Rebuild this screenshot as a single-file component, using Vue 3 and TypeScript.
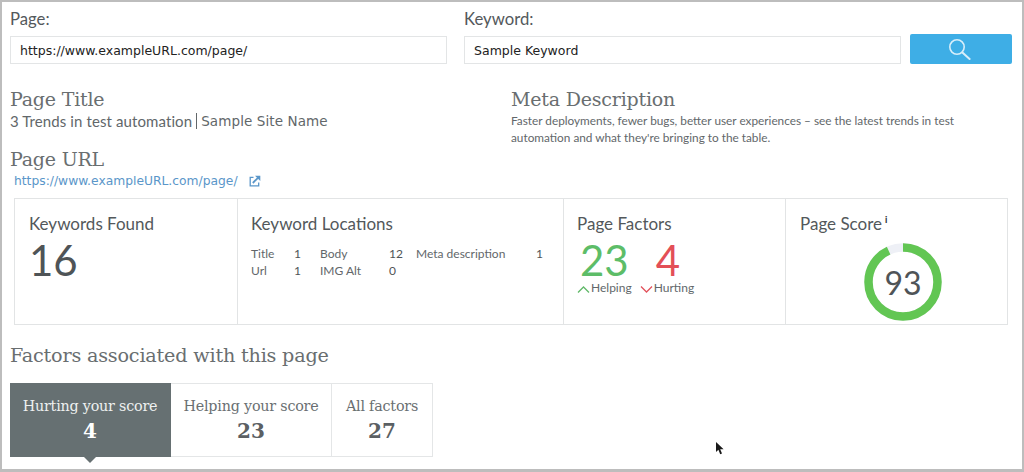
<script setup lang="ts">
const locations = [
  { label: 'Title', value: '1' },
  { label: 'Body', value: '12' },
  { label: 'Meta description', value: '1' },
  { label: 'Url', value: '1' },
  { label: 'IMG Alt', value: '0' },
]
const tabs = [
  { label: 'Hurting your score', value: 4, active: true },
  { label: 'Helping your score', value: 23, active: false },
  { label: 'All factors', value: 27, active: false },
]
const radius = 34.5
const circumference = 2 * Math.PI * radius
const dash = `${circumference * 0.93} ${circumference * 0.07}`
</script>

<template>
  <div class="frame">
    <div class="search">
      <label class="field page-field">
        <span class="label">Page:</span>
        <input class="input" value="https://www.exampleURL.com/page/" />
      </label>
      <label class="field keyword-field">
        <span class="label">Keyword:</span>
        <input class="input" value="Sample Keyword" />
      </label>
      <button class="go" aria-label="Search">
        <svg width="24" height="24" viewBox="0 0 24 24" fill="none" stroke="#d8eefa" stroke-width="1.6" stroke-linecap="round">
          <circle cx="10" cy="10" r="7.200" />
          <path d="M15.400 15.400 22.600 22" stroke-width="2" />
        </svg>
      </button>
    </div>

    <div class="meta">
      <div class="meta-left">
        <h2 class="slab">Page Title</h2>
        <p class="title-text"><span>3 Trends in test automation</span><i class="pipe"></i><span class="site">Sample Site Name</span></p>
        <h2 class="slab url-head">Page URL</h2>
        <p class="url-line">
          <a class="url">https://www.exampleURL.com/page/</a>
          <svg class="ext" width="12" height="12" viewBox="0 0 12 12" fill="none" stroke="#5a96c9" stroke-width="1.300">
            <path d="M4.500 2.300H1.200V10.800H9.700V7.500" />
            <path d="M3.800 8 9 2.800" stroke-width="1.800" />
            <path d="M6 .7H11.300V6z" fill="#5a96c9" stroke="none" />
          </svg>
        </p>
      </div>
      <div class="meta-right">
        <h2 class="slab">Meta Description</h2>
        <p class="desc">Faster deployments, fewer bugs, better user experiences – see the latest trends in test automation and what they're bringing to the table.</p>
      </div>
    </div>

    <div class="cards">
      <section class="card c1">
        <h3>Keywords Found</h3>
        <div class="big">16</div>
      </section>
      <section class="card c2">
        <h3>Keyword Locations</h3>
        <div class="locs">
          <template v-for="l in locations" :key="l.label">
            <span>{{ l.label }}</span>
            <b>{{ l.value }}</b>
          </template>
        </div>
      </section>
      <section class="card c3">
        <h3>Page Factors</h3>
        <div class="factors">
          <div class="factor helping">
            <div class="big">23</div>
            <div class="caption">
              <svg width="13" height="7" viewBox="0 0 13 7" fill="none" stroke="#62b96a" stroke-width="1.300"><path d="M1 6.500 6.500 1 12 6.500" /></svg>
              <span>Helping</span>
            </div>
          </div>
          <div class="factor hurting">
            <div class="big">4</div>
            <div class="caption">
              <svg width="13" height="7" viewBox="0 0 13 7" fill="none" stroke="#e2525c" stroke-width="1.300"><path d="M1 .5 6.500 6 12 .5" /></svg>
              <span>Hurting</span>
            </div>
          </div>
        </div>
      </section>
      <section class="card c4">
        <h3>Page Score<sup>i</sup></h3>
        <div class="ring">
          <svg width="80" height="80" viewBox="0 0 80 80">
            <circle cx="40" cy="40" :r="radius" fill="none" stroke="#eef0f6" stroke-width="8.500" />
            <circle cx="40" cy="40" :r="radius" fill="none" stroke="#62c653" stroke-width="8.500" :stroke-dasharray="dash" transform="rotate(-90 40 40)" />
          </svg>
          <span>93</span>
        </div>
      </section>
    </div>

    <h2 class="slab factors-head">Factors associated with this page</h2>
    <div class="tabs">
      <div v-for="t in tabs" :key="t.label" class="tab" :class="{ active: t.active }">
        <span class="tab-label">{{ t.label }}</span>
        <strong>{{ t.value }}</strong>
      </div>
    </div>

    <svg class="cursor" width="10" height="15" viewBox="0 0 10 15">
      <path d="M1 1v10l2.400-2.200 1.800 4.400 1.800-.8-1.800-4.200H8.600z" fill="#1a1a1a" />
    </svg>
  </div>
</template>

<style>
html, body { margin: 0; background: #fff; }
</style>

<style scoped>
.frame {
  position: relative;
  box-sizing: border-box;
  width: 1024px;
  height: 472px;
  padding: 8px 10px 0 8px;
  border: 2px solid #bdbdbd;
  border-bottom-width: 3px;
  background: #fff;
  overflow: hidden;
  font-family: Lato, "Liberation Sans", sans-serif;
  color: #555b5e;
}
.search { display: flex; align-items: flex-end; }
.field { display: flex; flex-direction: column; width: 438px; }
.keyword-field { margin-left: 17px; }
.label { font-size: 16.700px; line-height: 19px; margin-bottom: 7px; color: #54595c; }
.input {
  box-sizing: border-box;
  height: 28px;
  padding: 0 9px;
  border: 1px solid #e3e5e6;
  background: #fff;
  font: 12.500px "DejaVu Sans", sans-serif;
  color: #222;
  outline: none;
}
.go {
  display: flex;
  align-items: center;
  justify-content: center;
  width: 102px;
  height: 30px;
  margin-left: 9px;
  padding: 0 5px 0 0;
  border: 0;
  border-radius: 2px;
  background: #3eaee6;
}
.meta { display: flex; margin-top: 23px; }
.meta-left { width: 501px; }
.meta-right { flex: 1; }
.slab {
  margin: 0;
  font-family: "DejaVu Serif", serif;
  font-weight: 400;
  font-size: 19px;
  line-height: 24px;
  letter-spacing: -0.2px;
  color: #696e70;
}
.title-text {
  display: flex;
  align-items: center;
  margin: 0;
  height: 19px;
  font-size: 15px;
  color: #62676a;
  letter-spacing: .1px;
}
.pipe { width: 1px; height: 16px; margin: 0 4px 0 4px; background: #62676a; }
.site { font-family: "DejaVu Sans", sans-serif; font-size: 13.500px; }
.url-head { margin-top: 17px; }
.url-line { display: flex; align-items: center; margin: 1px 0 0 4px; height: 17px; }
.url { font: 12.300px "DejaVu Sans", sans-serif; color: #5a96c9; }
.ext { margin-left: 11px; }
.desc {
  margin: 1px 0 0;
  width: 450px;
  font-size: 11.800px;
  line-height: 17px;
  color: #62676a;
}
.cards {
  display: flex;
  box-sizing: border-box;
  width: 994px;
  height: 127px;
  margin: 9px 0 0 4px;
  border: 1px solid #e2e4e5;
}
.card { box-sizing: border-box; padding: 14px 13px 0; border-left: 1px solid #e2e4e5; }
.c1 { width: 222px; border-left: 0; padding-left: 14px; }
.c2 { width: 326px; }
.c3 { width: 222px; }
.c4 { flex: 1; padding-left: 14px; }
.card h3 {
  margin: 0;
  font-size: 17px;
  line-height: 22px;
  font-weight: 400;
  color: #53585b;
}
.card h3 sup { font-size: 9px; line-height: 0; margin-left: 3px; font-weight: 900; vertical-align: 7px; color: #33383b; }
.big { font-size: 42px; line-height: 44px; font-weight: 400; color: #4f5457; margin-top: 3px; }
.locs {
  display: grid;
  grid-template-columns: 43px 26px 69px 27px 120px auto;
  margin-top: 10px;
  font-size: 12px;
  line-height: 17px;
  color: #62676a;
}
.locs b { font-weight: 400; color: #4f5457; }
.factors { display: flex; gap: 8px; }
.factor .big { margin-left: 3px; }
.helping .big { color: #5dbd68; }
.hurting .big { color: #e34f57; margin-left: 16px; }
.caption { display: flex; align-items: center; gap: 1px; font-size: 12px; line-height: 14px; margin-top: -1px; color: #62676a; }
.caption svg { margin-top: 2px; }
.ring { position: relative; width: 80px; height: 80px; margin: 7px 0 0 63px; }
.ring svg { display: block; }
.ring span {
  position: absolute;
  inset: 0;
  display: flex;
  align-items: center;
  justify-content: center;
  font-size: 32px;
  font-weight: 400;
  color: #4f5457;
}
.factors-head { margin-top: 19px; font-size: 19.200px; }
.tabs { display: flex; margin-top: 15px; width: max-content; }
.tab {
  position: relative;
  display: flex;
  flex-direction: column;
  align-items: center;
  box-sizing: border-box;
  height: 74px;
  padding-top: 12px;
  border: 1px solid #e4e6e7;
  border-left: 0;
  color: #6a6f72;
}
.tab:nth-child(1) { width: 161px; }
.tab:nth-child(2) { width: 161px; }
.tab:nth-child(3) { width: 101px; }
.tab-label { font-family: "DejaVu Serif", serif; font-size: 14.300px; line-height: 20px; letter-spacing: -0.2px; }
.tab strong { font-family: "DejaVu Serif", serif; font-size: 20px; line-height: 30px; color: #5b6063; }
.tab.active { background: #667072; border-color: #667072; color: #eef0f0; }
.tab.active strong { color: #fff; }
.tab.active::after {
  content: "";
  position: absolute;
  left: 50%;
  bottom: -7px;
  margin-left: -7px;
  border-left: 7px solid transparent;
  border-right: 7px solid transparent;
  border-top: 7px solid #667072;
}
.cursor { position: absolute; left: 713px; top: 439px; }
</style>
